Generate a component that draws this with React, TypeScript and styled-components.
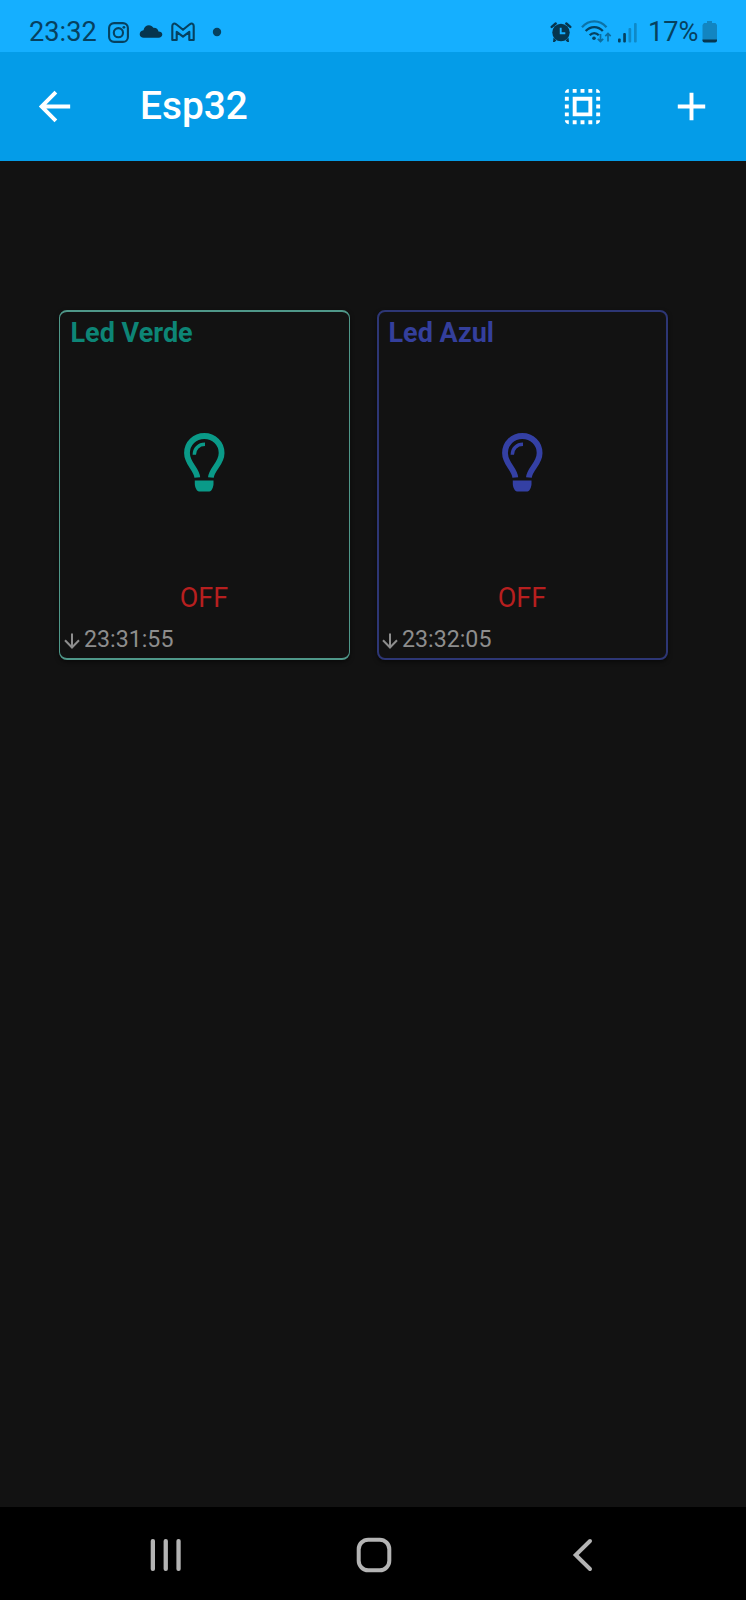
import React from "react";
import styled, { createGlobalStyle } from "styled-components";

const GlobalStyle = createGlobalStyle`
  *, *::before, *::after { box-sizing: border-box; }
  body { margin: 0; background: #121212; }
`;

const Screen = styled.div`
  display: flex;
  flex-direction: column;
  width: 746px;
  height: 1600px;
  background: #121212;
  font-family: Roboto, "Liberation Sans", sans-serif;
  overflow: hidden;
`;

const StatusBar = styled.header`
  display: flex;
  justify-content: space-between;
  height: 52px;
  padding: 12px 28px 0 29px;
  background: #15afff;
  color: #06415f;
`;

const StatusGroup = styled.div`
  display: flex;
  align-items: center;
  height: 40px;
`;

const StatusText = styled.span<{ $width: number; $gap?: number }>`
  width: ${(p) => p.$width}px;
  margin-left: ${(p) => p.$gap ?? 0}px;
  font-size: 27.2px;
  line-height: 40px;
  white-space: nowrap;
`;

const Glyph = styled.svg<{ $gap?: number }>`
  display: block;
  flex: none;
  margin-left: ${(p) => p.$gap ?? 0}px;
`;

const AppBar = styled.div`
  display: flex;
  align-items: center;
  height: 109px;
  padding: 0 31px 1px;
  background: #049ce8;
  color: #fff;
`;

const IconButton = styled.button`
  display: flex;
  padding: 0;
  border: 0;
  background: none;
  color: inherit;
`;

const Title = styled.h1`
  flex: 1;
  margin: 0 0 1px 62px;
  font-size: 38.8px;
  font-weight: 500;
  line-height: 46px;
`;

const Actions = styled.div`
  display: flex;
  gap: 62px;
`;

const Board = styled.main`
  display: flex;
  flex: 1;
  align-items: flex-start;
  gap: 27px;
  padding: 149px 59px 0;
`;

const Card = styled.article<{ $border: string; $side: number }>`
  display: flex;
  flex-direction: column;
  width: 291px;
  height: 350px;
  padding: 0 ${(p) => 2 - p.$side}px;
  border: 2px solid ${(p) => p.$border};
  border-width: 2px ${(p) => p.$side}px;
  border-radius: 8px;
  box-shadow: 0 2px 4px rgba(0, 0, 0, 0.5);
`;

const CardTitle = styled.h2<{ $color: string }>`
  margin: 5px 0 0 9.5px;
  color: ${(p) => p.$color};
  font-size: 27px;
  font-weight: 700;
  line-height: 32px;
`;

const BulbArea = styled.div`
  display: flex;
  justify-content: center;
  margin-top: 83.5px;
`;

const State = styled.div`
  margin-top: 90.5px;
  padding-right: 1px;
  color: #b71f1f;
  font-size: 27px;
  line-height: 32px;
  text-align: center;
`;

const Updated = styled.div`
  display: flex;
  align-items: center;
  margin: 12px 0 0 3px;
  color: #8d8d8d;
  font-size: 23.2px;
  line-height: 26px;
`;

const UpdatedTime = styled.span`
  margin-left: 4px;
`;

const NavBar = styled.nav`
  display: flex;
  align-items: center;
  height: 93px;
  padding: 3px 0 0 149px;
  background: #000;
  color: #b4b4b4;
`;

const NavButton = styled(IconButton)<{ $gap?: number }>`
  margin-left: ${(p) => p.$gap ?? 0}px;
`;

const Bulb = ({ color }: { color: string }) => (
  <Glyph width="41" height="59" viewBox="0 0 41 59" fill="none" stroke={color}>
    <path
      d="M13.3 44.6C12.500 35.500 3 31 3 20C3 10.300 10.700 3 20.300 3S37.600 10.300 37.600 20C37.600 31 27.700 35.500 26.900 44.600"
      strokeWidth="5.8"
    />
    <path d="M10.300 21.800C10.300 15.500 14.700 11.300 21 11.300" strokeWidth="3.400" />
    <path d="M10.800 47.600h18.700v3.200C29.500 54 27.500 58.600 25.400 58.600H15c-2.200 0-4.200-4.600-4.200-7.800z" fill={color} stroke="none" />
  </Glyph>
);

const DownArrow = () => (
  <Glyph width="16" height="20" viewBox="0 0 16 20" fill="none" stroke="currentColor" strokeWidth="2">
    <path d="M8 4.500v14M1 11.300l7 7.200 7-7.200" />
  </Glyph>
);

interface Led {
  name: string;
  text: string;
  icon: string;
  border: string;
  side: number;
  time: string;
}

const leds: Led[] = [
  { name: "Led Verde", text: "#0d8576", icon: "#0a9a88", border: "#4f9789", side: 1, time: "23:31:55" },
  { name: "Led Azul", text: "#343f9c", icon: "#3440a4", border: "#2d3675", side: 2, time: "23:32:05" },
];

const LedCard = ({ led }: { led: Led }) => (
  <Card $border={led.border} $side={led.side}>
    <CardTitle $color={led.text}>{led.name}</CardTitle>
    <BulbArea>
      <Bulb color={led.icon} />
    </BulbArea>
    <State>OFF</State>
    <Updated>
      <DownArrow />
      <UpdatedTime>{led.time}</UpdatedTime>
    </Updated>
  </Card>
);

export default function App() {
  return (
    <Screen>
      <GlobalStyle />
      <StatusBar>
        <StatusGroup>
          <StatusText $width={68}>23:32</StatusText>
          <Glyph $gap={11} width="21" height="21" viewBox="0 0 21 21" fill="none" stroke="currentColor" strokeWidth="2.1">
            <rect x="1.100" y="1.100" width="18.800" height="18.800" rx="5" />
            <circle cx="10.400" cy="10.700" r="4.600" />
            <circle cx="15.900" cy="5.300" r="1.400" fill="currentColor" stroke="none" />
          </Glyph>
          <Glyph $gap={10} width="24" height="20" viewBox="0 0 24 20" fill="#06364f">
            <path d="M4.800 15.800C2.400 15.800.700 14.400.700 12.200S2.300 8.600 4.500 8.300C5.200 5 7.300 3.300 9.900 3.300c2 0 3.500.900 4.400 2.500 3-.200 4.800 1.300 5.200 3.700 2.300.100 3.800 1.200 3.800 3.100s-1.600 3.200-3.800 3.200z" />
          </Glyph>
          <Glyph $gap={8} width="24" height="20" viewBox="0 0 24 20" fill="none" stroke="currentColor" strokeWidth="2.1" strokeLinejoin="round">
            <path d="M1.300 18V4C1.300 1.400 3.500 1 5.200 2.300L12 7.800 18.800 2.300C20.500 1 22.700 1.400 22.700 4V18H18.300V9.800L12 14.700 5.700 9.800V18Z" />
          </Glyph>
          <Glyph $gap={17} width="10" height="10" viewBox="0 0 10 10" fill="currentColor">
            <circle cx="5" cy="5" r="4.200" />
          </Glyph>
        </StatusGroup>
        <StatusGroup>
          <Glyph width="22" height="20" viewBox="0 0 22 20" fill="#06364f">
            <path d="M3.500 15.500L6.500 18.500 4.500 20H3zM18.500 15.500L15.500 18.500 17.500 20H19z" />
            <circle cx="11" cy="10.500" r="8.700" />
            <path d="M1.700 4.900L5.700 1.500M20.300 4.900L16.300 1.500" stroke="#06364f" strokeWidth="2.400" strokeLinecap="round" />
            <path d="M10.700 5.800v5.500h4.600" fill="none" stroke="#15afff" strokeWidth="1.900" />
          </Glyph>
          <Glyph $gap={9} width="31" height="24" viewBox="0 0 31 24" fill="none" stroke="currentColor" strokeWidth="2.300">
            <path d="M1 7.200C8-.500 18.500-.500 25.500 7.200" opacity=".55" />
            <path d="M4.700 11C9.500 5.800 17 5.800 21.800 11M8.700 15.200C11.300 12.300 15.200 12.300 17.800 15.200" />
            <circle cx="13" cy="18.300" r="1.800" fill="currentColor" stroke="none" />
            <path d="M19.500 14v7.500M16.800 18.800l2.700 2.700 2.700-2.700M27 21.500V13.500M24.300 16.200l2.700-2.700 2.700 2.700" strokeWidth="1.700" opacity=".6" />
          </Glyph>
          <Glyph $gap={6} width="20" height="21" viewBox="0 0 20 21" fill="currentColor">
            <rect x="0" y="16.500" width="2.700" height="4" rx="1" />
            <rect x="5.200" y="11" width="2.700" height="9.500" rx="1" />
            <rect x="10.500" y="6" width="2.700" height="14.500" rx="1" opacity=".35" />
            <rect x="16" y="1" width="2.700" height="19.500" rx="1" opacity=".35" />
          </Glyph>
          <StatusText $gap={10} $width={53}>17%</StatusText>
          <Glyph $gap={1} width="16" height="22" viewBox="0 0 16 22">
            <path d="M5 0h5v2h3.500L15 4v15.500H.500V4L2 2h3z" fill="#1285c1" />
            <path d="M.500 18.500H15v1.200q0 1.800-2 1.800H2.500q-2 0-2-1.800z" fill="#06364f" />
          </Glyph>
        </StatusGroup>
      </StatusBar>
      <AppBar>
        <IconButton aria-label="Back">
          <Glyph width="47" height="47" viewBox="0 0 24 24" fill="currentColor">
            <path d="M20 11H7.830l5.590-5.590L12 4l-8 8 8 8 1.410-1.410L7.830 13H20z" />
          </Glyph>
        </IconButton>
        <Title>Esp32</Title>
        <Actions>
          <IconButton aria-label="Select all">
            <Glyph width="47" height="47" viewBox="0 0 24 24" fill="currentColor">
              <path d="M3 5h2V3c-1.100 0-2 .900-2 2zm0 8h2v-2H3v2zm4 8h2v-2H7v2zM3 9h2V7H3v2zm10-6h-2v2h2V3zm6 0v2h2c0-1.100-.900-2-2-2zM5 21v-2H3c0 1.100.900 2 2 2zm-2-4h2v-2H3v2zM9 3H7v2h2V3zm2 18h2v-2h-2v2zm8-8h2v-2h-2v2zm0 8c1.100 0 2-.900 2-2h-2v2zm0-12h2V7h-2v2zm0 8h2v-2h-2v2zm-4 4h2v-2h-2v2zm0-16h2V3h-2v2zM7 17h10V7H7v10zm2-8h6v6H9V9z" />
            </Glyph>
          </IconButton>
          <IconButton aria-label="Add">
            <Glyph width="47" height="47" viewBox="0 0 24 24" fill="currentColor">
              <path d="M19 13h-6v6h-2v-6H5v-2h6V5h2v6h6z" />
            </Glyph>
          </IconButton>
        </Actions>
      </AppBar>
      <Board>
        {leds.map((led) => (
          <LedCard key={led.name} led={led} />
        ))}
      </Board>
      <NavBar>
        <NavButton aria-label="Recent apps">
          <Glyph width="34" height="34" viewBox="0 0 34 34" fill="currentColor">
            <rect x="1.700" y="1" width="4.300" height="32" rx="2" />
            <rect x="14.600" y="1" width="4.300" height="32" rx="2" />
            <rect x="27.400" y="1" width="4.300" height="32" rx="2" />
          </Glyph>
        </NavButton>
        <NavButton $gap={173} aria-label="Home">
          <Glyph width="36" height="36" viewBox="0 0 36 36" fill="none" stroke="currentColor" strokeWidth="4">
            <rect x="2.700" y="2.700" width="30.600" height="30.600" rx="9.500" />
          </Glyph>
        </NavButton>
        <NavButton $gap={180} aria-label="Go back">
          <Glyph width="22" height="34" viewBox="0 0 22 34" fill="none" stroke="currentColor" strokeWidth="4" strokeLinecap="round">
            <path d="M18 3L3.700 17l14.300 14" />
          </Glyph>
        </NavButton>
      </NavBar>
    </Screen>
  );
}
